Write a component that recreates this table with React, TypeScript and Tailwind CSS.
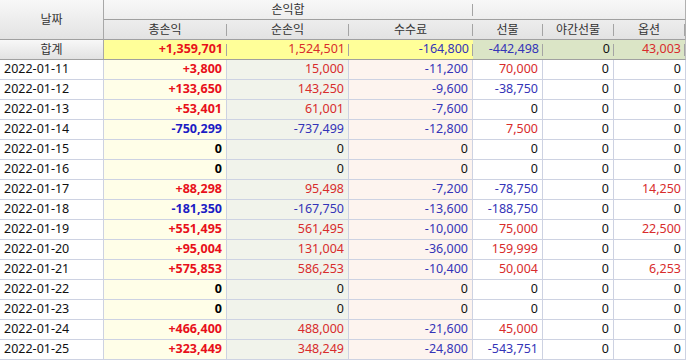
import React from 'react'

type Row = {
  date: string
  total: number
  net: number
  fee: number
  fut: number
  night: number
  opt: number
}

const ROWS: Row[] = [
  { date: '2022-01-11', total: 3800, net: 15000, fee: -11200, fut: 70000, night: 0, opt: 0 },
  { date: '2022-01-12', total: 133650, net: 143250, fee: -9600, fut: -38750, night: 0, opt: 0 },
  { date: '2022-01-13', total: 53401, net: 61001, fee: -7600, fut: 0, night: 0, opt: 0 },
  { date: '2022-01-14', total: -750299, net: -737499, fee: -12800, fut: 7500, night: 0, opt: 0 },
  { date: '2022-01-15', total: 0, net: 0, fee: 0, fut: 0, night: 0, opt: 0 },
  { date: '2022-01-16', total: 0, net: 0, fee: 0, fut: 0, night: 0, opt: 0 },
  { date: '2022-01-17', total: 88298, net: 95498, fee: -7200, fut: -78750, night: 0, opt: 14250 },
  { date: '2022-01-18', total: -181350, net: -167750, fee: -13600, fut: -188750, night: 0, opt: 0 },
  { date: '2022-01-19', total: 551495, net: 561495, fee: -10000, fut: 75000, night: 0, opt: 22500 },
  { date: '2022-01-20', total: 95004, net: 131004, fee: -36000, fut: 159999, night: 0, opt: 0 },
  { date: '2022-01-21', total: 575853, net: 586253, fee: -10400, fut: 50004, night: 0, opt: 6253 },
  { date: '2022-01-22', total: 0, net: 0, fee: 0, fut: 0, night: 0, opt: 0 },
  { date: '2022-01-23', total: 0, net: 0, fee: 0, fut: 0, night: 0, opt: 0 },
  { date: '2022-01-24', total: 466400, net: 488000, fee: -21600, fut: 45000, night: 0, opt: 0 },
  { date: '2022-01-25', total: 323449, net: 348249, fee: -24800, fut: -543751, night: 0, opt: 0 },
]

const SUM: Row = { date: '합계', total: 1359701, net: 1524501, fee: -164800, fut: -442498, night: 0, opt: 43003 }

const fmt = (n: number) => n.toLocaleString('en-US')
const fmtSigned = (n: number) => (n > 0 ? '+' + fmt(n) : fmt(n))

// plain value colour (red up, blue down, dark zero)
const tone = (n: number) => (n > 0 ? 'text-[#d82c2c]' : n < 0 ? 'text-[#3434b8]' : 'text-[#111]')
const toneBold = (n: number) => (n > 0 ? 'text-[#e8101a]' : n < 0 ? 'text-[#1c1cc4]' : 'text-[#000]')

const HEAD = 'bg-gradient-to-b from-[#f8f8f8] to-[#e2e2e2]'
const Sep = () => <div className="w-px h-[12px] bg-[#a4a4a4] self-center shrink-0" />

export default function App() {
  return (
    <div
      className="w-[690px] h-[364px] bg-white overflow-hidden text-[12.5px] leading-none text-[#111]"
      style={{ fontFamily: '"Noto Sans", "Noto Sans CJK KR", sans-serif' }}
    >
      {/* ── header ─────────────────────────────────────── */}
      <div className={`flex w-[686px] h-[40px] border-r border-[#b0b0b0] ${HEAD}`}>
        <div className="w-[104px] flex items-center justify-center border-r border-[#a8a8a8] border-b border-b-[#a0a0a0] text-[#333] text-[12px]">
          날짜
        </div>
        <div className="flex flex-col flex-1 text-[12px]">
          <div className="flex h-[20px] border-b border-[#a0a0a0]">
            <div className="w-[369px] flex items-center">
              <span className="flex-1 text-center text-[#333]">손익합</span>
              <Sep />
            </div>
            <div className="flex-1" />
          </div>
          <div className="flex h-[20px] border-b border-[#a0a0a0]">
            {[
              ['총손익', 'w-[123px]'],
              ['순손익', 'w-[122px]'],
              ['수수료', 'w-[124px]'],
              ['선물', 'w-[70px]'],
              ['야간선물', 'w-[71px]'],
              ['옵션', 'w-[71px]'],
            ].map(([t, w]) => (
              <div key={t} className={`${w} flex items-center`}>
                <span className="flex-1 text-center text-[#333]">{t}</span>
                <Sep />
              </div>
            ))}
          </div>
        </div>
      </div>

      {/* ── 합계 ─────────────────────────────────────── */}
      <div className="flex w-[686px] h-[20px] border-b border-[#a0a0a0] border-r border-r-[#c0c0c0]">
        <div className={`w-[104px] flex items-center justify-center border-r border-[#a8a8a8] ${HEAD} text-[#333] text-[12px]`}>
          {SUM.date}
        </div>
        <div className="w-[123px] flex items-center bg-[#ffff99]">
          <span className={`flex-1 text-right pr-[3px] font-bold ${toneBold(SUM.total)}`}>{fmtSigned(SUM.total)}</span>
          <Sep />
        </div>
        <div className="w-[122px] flex items-center bg-[#ffff99]">
          <span className={`flex-1 text-right pr-[3px] ${tone(SUM.net)}`}>{fmt(SUM.net)}</span>
          <Sep />
        </div>
        <div className="w-[124px] flex items-center bg-[#ffff99]">
          <span className={`flex-1 text-right pr-[3px] ${tone(SUM.fee)}`}>{fmt(SUM.fee)}</span>
          <Sep />
        </div>
        {[
          [SUM.fut, 'w-[70px]'],
          [SUM.night, 'w-[71px]'],
          [SUM.opt, 'w-[71px]'],
        ].map(([v, w], i) => (
          <div key={i} className={`${w} flex items-center bg-[#dbe5c6]`}>
            <span className={`flex-1 text-right pr-[3px] ${tone(v as number)}`}>{fmt(v as number)}</span>
            <Sep />
          </div>
        ))}
      </div>

      {/* ── rows ─────────────────────────────────────── */}
      {ROWS.map((r) => (
        <div key={r.date} className="flex w-[686px] h-[20px] border-b border-[#cdd2e2]">
          <div className="w-[104px] flex items-center pl-[4px] border-r border-[#cdd2e2]">{r.date}</div>
          <div className={`w-[123px] flex items-center justify-end pr-[4px] border-r border-[#cdd2e2] bg-[#fffee8] font-bold ${toneBold(r.total)}`}>
            {fmtSigned(r.total)}
          </div>
          <div className={`w-[122px] flex items-center justify-end pr-[4px] border-r border-[#cdd2e2] bg-[#f1f3eb] ${tone(r.net)}`}>
            {fmt(r.net)}
          </div>
          <div className={`w-[124px] flex items-center justify-end pr-[4px] border-r border-[#cdd2e2] bg-[#fdf4ef] ${tone(r.fee)}`}>
            {fmt(r.fee)}
          </div>
          <div className={`w-[70px] flex items-center justify-end pr-[4px] border-r border-[#cdd2e2] ${tone(r.fut)}`}>
            {fmt(r.fut)}
          </div>
          <div className={`w-[71px] flex items-center justify-end pr-[4px] border-r border-[#cdd2e2] ${tone(r.night)}`}>
            {fmt(r.night)}
          </div>
          <div className={`w-[72px] flex items-center justify-end pr-[4px] border-r border-[#cdd2e2] ${tone(r.opt)}`}>
            {fmt(r.opt)}
          </div>
        </div>
      ))}
    </div>
  )
}
